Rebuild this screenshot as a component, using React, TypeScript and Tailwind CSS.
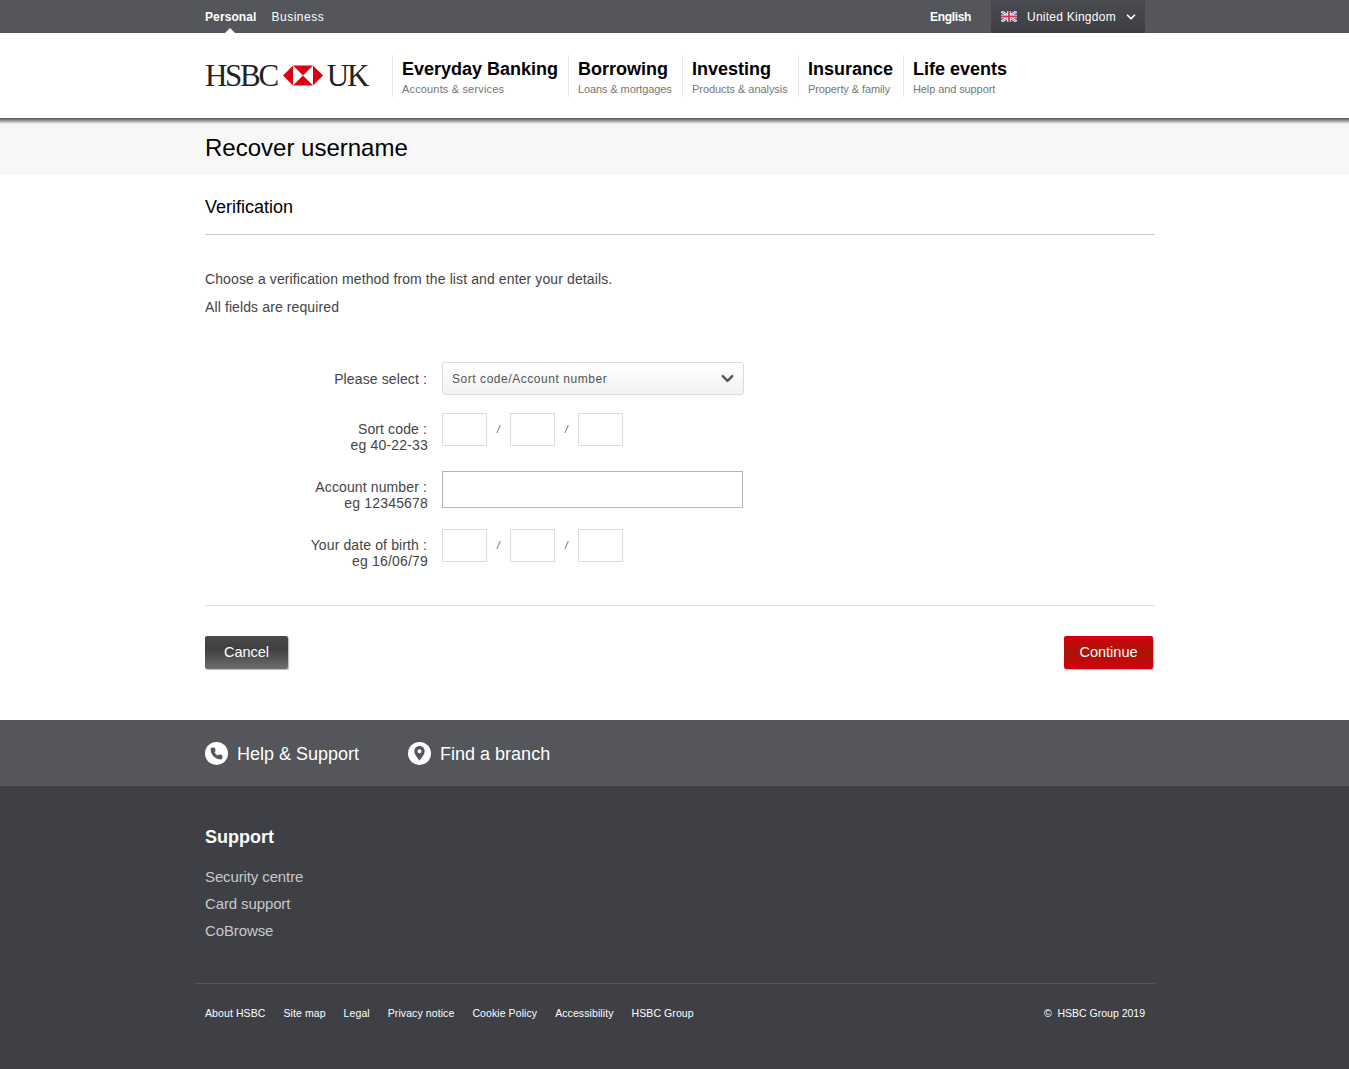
import React from 'react';
import { ChevronDown, Phone } from 'lucide-react';

const navItems = [
  { title: 'Everyday Banking', sub: 'Accounts & services', width: 'w-[176px]', track: 'tracking-[0.16px]' },
  { title: 'Borrowing', sub: 'Loans & mortgages', width: 'w-[114px]', track: 'tracking-[-0.1px]' },
  { title: 'Investing', sub: 'Products & analysis', width: 'w-[116px]', track: 'tracking-[-0.05px]' },
  { title: 'Insurance', sub: 'Property & family', width: 'w-[105px]', track: 'tracking-[-0.1px]' },
  { title: 'Life events', sub: 'Help and support', width: 'w-[120px]', track: 'tracking-[-0.1px]' },
];

const footerLinks = ['About HSBC', 'Site map', 'Legal', 'Privacy notice', 'Cookie Policy', 'Accessibility', 'HSBC Group'];

function HexLogo() {
  return (
    <svg width="40" height="21" viewBox="0 0 40 20" className="ml-[6px] mr-[4px]">
      <polygon points="10,0 30,0 40,10 30,20 10,20 0,10" fill="#fff" />
      <polygon points="0,10 10,0 10,20" fill="#db0011" />
      <polygon points="40,10 30,0 30,20" fill="#db0011" />
      <polygon points="10,0 30,0 20,10" fill="#db0011" />
      <polygon points="10,20 30,20 20,10" fill="#db0011" />
    </svg>
  );
}

function UkFlag() {
  return (
    <svg width="16" height="11" viewBox="0 0 16 11">
      <rect width="16" height="11" fill="#3a4a9a" />
      <path d="M0 0L16 11M16 0L0 11" stroke="#fff" strokeWidth="2.4" />
      <path d="M0 0L16 11M16 0L0 11" stroke="#d8324a" strokeWidth="0.8" />
      <path d="M8 0V11M0 5.5H16" stroke="#fff" strokeWidth="3.4" />
      <path d="M8 0V11M0 5.5H16" stroke="#d8324a" strokeWidth="1.8" />
    </svg>
  );
}

function Triple() {
  return (
    <div className="flex items-center">
      <input className="w-[45px] h-[33px] border border-[#dcdcdc] bg-white" />
      <span className="w-[23px] text-center text-[10px] italic text-[#555]">/</span>
      <input className="w-[45px] h-[33px] border border-[#dcdcdc] bg-white" />
      <span className="w-[23px] text-center text-[10px] italic text-[#555]">/</span>
      <input className="w-[45px] h-[33px] border border-[#dcdcdc] bg-white" />
    </div>
  );
}

function Label({ text, hint }: { text: string; hint?: string }) {
  return (
    <div className="w-[223px] mr-[14px] text-right text-[14px] leading-[16px] text-[#444]">
      <div className="pr-[1px] tracking-[0.12px]">{text} :</div>
      {hint && <div className="tracking-[0.18px]">{hint}</div>}
    </div>
  );
}

export default function App() {
  return (
    <div className="min-h-[1069px] bg-white font-['Liberation_Sans',Arial,sans-serif]">
      {/* top strip */}
      <div className="h-[33px] bg-[#54565b]">
        <div className="w-[960px] ml-[195px] pl-[10px] h-full flex items-center text-[12px] text-white">
          <div className="relative font-bold h-full flex items-center tracking-[0.1px]">
            Personal
            <span className="absolute bottom-0 left-[20px] w-0 h-0 border-x-[5px] border-x-transparent border-b-[5px] border-b-white" />
          </div>
          <div className="ml-[15px] tracking-[0.5px]">Business</div>
          <div className="ml-auto font-bold mr-[20px] tracking-[-0.35px]">English</div>
          <div className="w-[154px] h-full mr-[10px] bg-gradient-to-b from-[#4a4b50] to-[#3e3f44] flex items-center pl-[10px]">
            <UkFlag />
            <span className="ml-[10px] tracking-[0.25px]">United Kingdom</span>
            <ChevronDown size={14} strokeWidth={3} className="ml-[8px]" />
          </div>
        </div>
      </div>

      {/* logo + main nav */}
      <div className="h-[85px] bg-white">
        <div className="w-[960px] ml-[195px] pl-[10px] h-full flex items-center">
          <div className="w-[187px] flex items-center font-['Liberation_Serif',serif] text-[31px] tracking-[-2.3px] leading-none text-[#222]">
            <span>HSBC</span>
            <HexLogo />
            <span>UK</span>
          </div>
          <div className="flex mt-[1px]">
            {navItems.map((n) => (
              <div key={n.title} className={`${n.width} h-[42px] border-l border-[#e5e5e5] pl-[9px]`}>
                <div className="text-[18px] leading-[24px] mt-[2px] font-bold text-black whitespace-nowrap">{n.title}</div>
                <div className={`text-[11px] leading-[15px] mt-[1px] text-[#767676] whitespace-nowrap ${n.track}`}>{n.sub}</div>
              </div>
            ))}
          </div>
        </div>
      </div>

      {/* page title */}
      <div className="h-[57px] bg-[#f7f7f7] relative">
        <div className="absolute top-0 inset-x-0 h-[6px] bg-gradient-to-b from-[#55565a] to-[#f7f7f7]" />
        <div className="w-[960px] ml-[195px] pl-[10px] pt-[15px]">
          <h1 className="text-[24px] leading-[30px] text-black">Recover username</h1>
        </div>
      </div>

      {/* form */}
      <div className="w-[960px] ml-[195px] pl-[10px]">
        <h2 className="text-[18px] leading-[22px] text-black pt-[21px] pb-[16px] border-b border-[#c8c8c8] h-[60px]">Verification</h2>
        <p className="mt-[36px] text-[14px] leading-[16px] tracking-[0.11px] text-[#444]">Choose a verification method from the list and enter your details.</p>
        <p className="mt-[12px] text-[14px] leading-[16px] tracking-[0.11px] text-[#444]">All fields are required</p>

        <div className="mt-[47px] flex items-center h-[33px]">
          <Label text="Please select" />
          <div className="w-[302px] h-[33px] rounded-[3px] border border-[#dcdcdc] bg-gradient-to-b from-white to-[#f2f2f2] flex items-center justify-between pl-[9px] pr-[6px] text-[12px] tracking-[0.55px] text-[#555]">
            <span>Sort code/Account number</span>
            <ChevronDown size={19} strokeWidth={3} className="text-[#555]" />
          </div>
        </div>

        <div className="mt-[18px] flex items-start h-[40px]">
          <div className="pt-[8px]"><Label text="Sort code" hint="eg 40-22-33" /></div>
          <Triple />
        </div>

        <div className="mt-[18px] flex items-start h-[40px]">
          <div className="pt-[8px]"><Label text="Account number" hint="eg 12345678" /></div>
          <input className="w-[301px] h-[37px] border border-[#b4b4b4] bg-white" />
        </div>

        <div className="mt-[18px] flex items-start h-[40px]">
          <div className="pt-[8px]"><Label text="Your date of birth" hint="eg 16/06/79" /></div>
          <Triple />
        </div>

        <div className="mt-[36px] border-t border-[#e0e0e0] pt-[30px] flex justify-between h-[115px]">
          <button className="w-[83px] h-[33px] rounded-[2px] bg-[linear-gradient(#4a4a4a,#3f3f3f_40%,#6e6e6e)] shadow-[1px_1px_1px_#bbb] text-white text-[14.5px]">Cancel</button>
          <button className="w-[89px] h-[33px] mr-[2px] pt-[1px] rounded-[2px] bg-[linear-gradient(#d40010,#a81505_50%,#d40010)] shadow-[1px_1px_1px_#bbb] text-white text-[14.5px]">Continue</button>
        </div>
      </div>

      {/* help band */}
      <div className="h-[66px] bg-[#54565b]">
        <div className="w-[960px] ml-[195px] pl-[10px] h-full flex items-center text-[18px] text-white">
          <span className="w-[23px] h-[23px] rounded-full bg-white flex items-center justify-center">
            <Phone size={13} fill="#54565b" stroke="#54565b" />
          </span>
          <span className="ml-[9px] pt-[2px]">Help &amp; Support</span>
          <span className="ml-[49px] w-[23px] h-[23px] rounded-full bg-white flex items-center justify-center">
            <svg width="11" height="15" viewBox="0 0 11 15">
              <path fillRule="evenodd" d="M5.5 0C2.5 0 .3 2.3.3 5.2c0 3.4 3.6 7 5.2 9.6 1.6-2.6 5.2-6.2 5.2-9.6C10.7 2.3 8.5 0 5.5 0zm0 3.3a2 2 0 1 1 0 4 2 2 0 0 1 0-4z" fill="#54565b" />
            </svg>
          </span>
          <span className="ml-[9px] pt-[2px]">Find a branch</span>
        </div>
      </div>

      {/* footer */}
      <div className="h-[283px] bg-[#3e4046]">
        <div className="w-[960px] ml-[195px]">
          <div className="pl-[10px] pt-[40px] h-[198px] border-b border-[#54565b]">
            <div className="text-[18px] leading-[22px] font-bold text-white">Support</div>
            <div className="mt-[19px] flex flex-col gap-[7px] text-[15px] leading-[20px] tracking-[-0.12px] text-[#c8c8c8]">
              <span>Security centre</span>
              <span>Card support</span>
              <span>CoBrowse</span>
            </div>
          </div>
          <div className="pl-[10px] pr-[10px] pt-[22px] flex text-[10.5px] leading-[14px] text-white">
            <div className="flex gap-[18px] tracking-[0.09px]">
              {footerLinks.map((l) => (
                <span key={l}>{l}</span>
              ))}
            </div>
            <span className="ml-auto">©&nbsp; HSBC Group 2019</span>
          </div>
        </div>
      </div>
    </div>
  );
}
